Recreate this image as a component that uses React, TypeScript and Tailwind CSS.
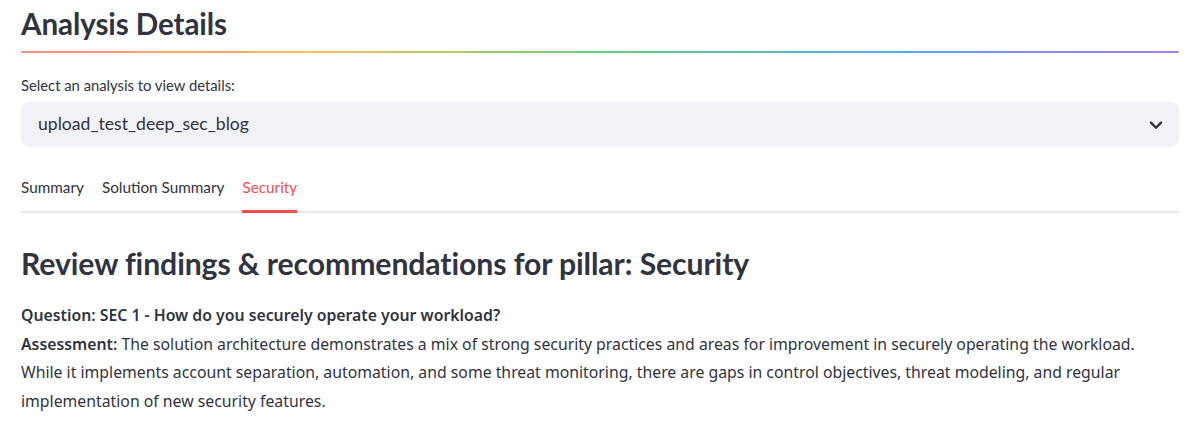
import React from "react";

function Chevron() {
  return (
    <svg width="22" height="22" viewBox="0 0 24 24" fill="none" stroke="#31333f" strokeWidth="2.6" strokeLinecap="round" strokeLinejoin="round">
      <path d="M6.5 9.5l5.5 5.5 5.5-5.5" />
    </svg>
  );
}

export default function App() {
  return (
    <div className="min-h-[424px] w-full bg-white text-[#31333f] font-['Lato',sans-serif] overflow-hidden">
      <div className="px-[21px]">
        <h2 className="pt-[3px] text-[29.6px] font-bold leading-[42px] tracking-[-0.1px]">Analysis Details</h2>
        <div className="mt-[6px] h-[2px] rounded-full bg-[linear-gradient(to_right,#ff8a80,#fdc05a_25%,#5fd67c_50%,#58a9ee_75%,#ab78fa)]" />
        <div className="mt-[22px] text-[14.8px] leading-[20px]">Select an analysis to view details:</div>
        <div className="mt-[7px] flex h-[45px] items-center justify-between rounded-[8px] bg-[#f0f2f6] pl-[17px] pr-[12px]">
          <span className="text-[17.6px]">upload_test_deep_sec_blog</span>
          <Chevron />
        </div>
        <div className="mt-[29px] flex gap-[18px] border-b-2 border-[#e6e9ef] text-[15.3px]">
          <div className="pb-[13px] leading-[22px]">Summary</div>
          <div className="pb-[13px] leading-[22px]">Solution Summary</div>
          <div className="relative pb-[13px] leading-[22px] text-[#ff4b4b]">
            Security
            <div className="absolute -bottom-[2px] left-0 right-0 h-[3px] bg-[#ff4b4b]" />
          </div>
        </div>
        <h3 className="mt-[30px] text-[30.2px] font-bold leading-[40px] tracking-[-0.1px]">Review findings &amp; recommendations for pillar: Security</h3>
        <div className="mt-[18px] font-['Noto_Sans',sans-serif] text-[15.8px] leading-[28.5px]">
          <p className="font-semibold">Question: SEC 1 - How do you securely operate your workload?</p>
          <p>
            <span className="font-semibold">Assessment:</span> The solution architecture demonstrates a mix of strong security practices and areas for improvement in securely operating the workload. While it implements account separation, automation, and some threat monitoring, there are gaps in control objectives, threat modeling, and regular implementation of new security features.
          </p>
        </div>
      </div>
    </div>
  );
}
